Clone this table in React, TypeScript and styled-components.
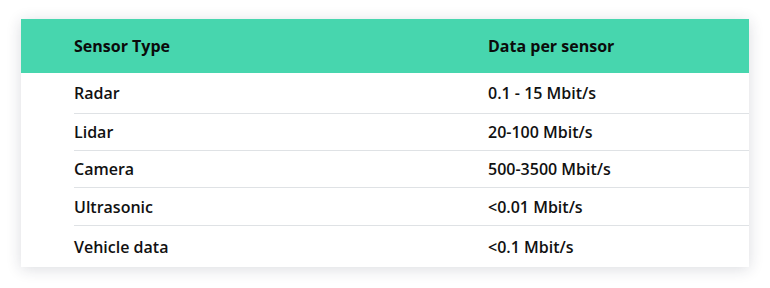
import React from "react";
import styled, { createGlobalStyle } from "styled-components";

const GlobalStyle = createGlobalStyle`
  html, body {
    margin: 0;
    padding: 0;
    background: #fff;
  }
  body {
    font-family: "Open Sans", "Noto Sans", sans-serif;
    color: #111;
  }
`;

const Page = styled.div`
  padding: 19px 21px 22px 21px;
`;

const Card = styled.div`
  background: #fff;
  box-shadow: 0 2px 14px rgba(30, 40, 60, 0.16);
`;

const Table = styled.table`
  width: 100%;
  border-collapse: collapse;
  table-layout: fixed;
`;

const HeadRow = styled.tr`
  background: #47d6ae;
  height: 54px;
`;

const HeadCell = styled.th`
  text-align: left;
  font-size: 16px;
  font-weight: 700;
  color: #0b0b0b;
  padding: 0;
  vertical-align: middle;
`;

const Row = styled.tr``;

const Cell = styled.td`
  height: 36px;
  padding: 0;
  font-size: 16px;
  font-weight: 600;
  color: #111;
  vertical-align: middle;
  ${Row}:not(:last-child) & {
    border-bottom: 1px solid #dfe2e5;
  }
  ${Row}:first-child & {
    height: 40px;
  }
  ${Row}:nth-child(4) & {
    height: 37px;
  }
  ${Row}:last-child & {
    height: 41px;
  }
`;

const Indent = styled.td`
  padding: 0;
`;

const rows: [string, string][] = [
  ["Radar", "0.1 - 15 Mbit/s"],
  ["Lidar", "20-100 Mbit/s"],
  ["Camera", "500-3500 Mbit/s"],
  ["Ultrasonic", "<0.01 Mbit/s"],
  ["Vehicle data", "<0.1 Mbit/s"],
];

const App = () => {
  return (
    <Page>
      <GlobalStyle />
      <Card>
        <Table>
          <colgroup>
            <col style={{ width: 53 }} />
            <col style={{ width: 414 }} />
            <col />
          </colgroup>
          <thead>
            <HeadRow>
              <HeadCell />
              <HeadCell>Sensor Type</HeadCell>
              <HeadCell>Data per sensor</HeadCell>
            </HeadRow>
          </thead>
          <tbody>
            {rows.map(([type, data]) => (
              <Row key={type}>
                <Indent />
                <Cell>{type}</Cell>
                <Cell>{data}</Cell>
              </Row>
            ))}
          </tbody>
        </Table>
      </Card>
    </Page>
  );
};

export default App;
